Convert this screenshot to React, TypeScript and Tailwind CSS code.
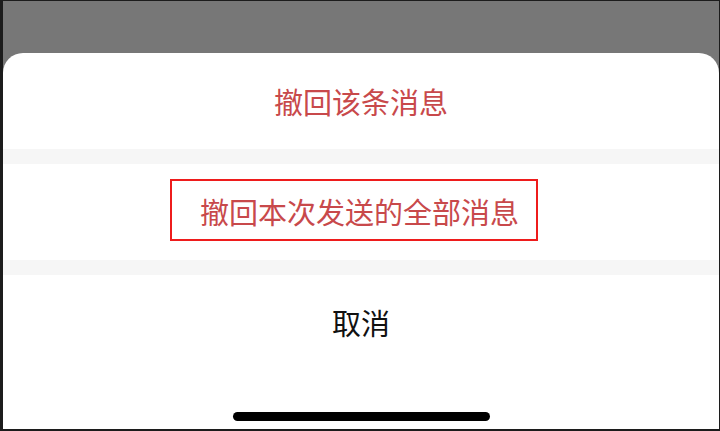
export default function App() {
  const font = { fontFamily: '"Noto Sans CJK SC", "Noto Sans", sans-serif' };
  return (
    <div
      className="w-[720px] h-[431px] box-border overflow-hidden bg-[#777777] border-l-[3px] border-t border-r border-b-2 border-[#1c1c1c] flex flex-col"
      style={font}
    >
      <div className="h-[52px] shrink-0" />
      <div className="flex-1 bg-white rounded-t-[20px] flex flex-col">
        <div className="h-[96px] shrink-0 flex items-center justify-center">
          <span className="text-[29px] leading-none text-[#c8494b] whitespace-nowrap">撤回该条消息</span>
        </div>
        <div className="h-[15px] shrink-0 bg-[#f6f6f6]" />
        <div className="h-[96px] shrink-0 flex items-start pl-[167px] pt-[15px]">
          <div className="w-[368px] h-[62px] shrink-0 box-border border-2 border-[#ee1c1c] flex items-center pl-[28px] pt-[3px]">
            <span className="text-[29px] leading-none text-[#c8494b] whitespace-nowrap">撤回本次发送的全部消息</span>
          </div>
        </div>
        <div className="h-[15px] shrink-0 bg-[#f6f6f6]" />
        <div className="h-[95px] shrink-0 flex items-center justify-center">
          <span className="text-[29px] leading-none text-[#111111] whitespace-nowrap">取消</span>
        </div>
        <div className="flex-1" />
        <div className="flex justify-center pb-[8px]">
          <div className="w-[257px] h-[9px] rounded-full bg-black" />
        </div>
      </div>
    </div>
  );
}
